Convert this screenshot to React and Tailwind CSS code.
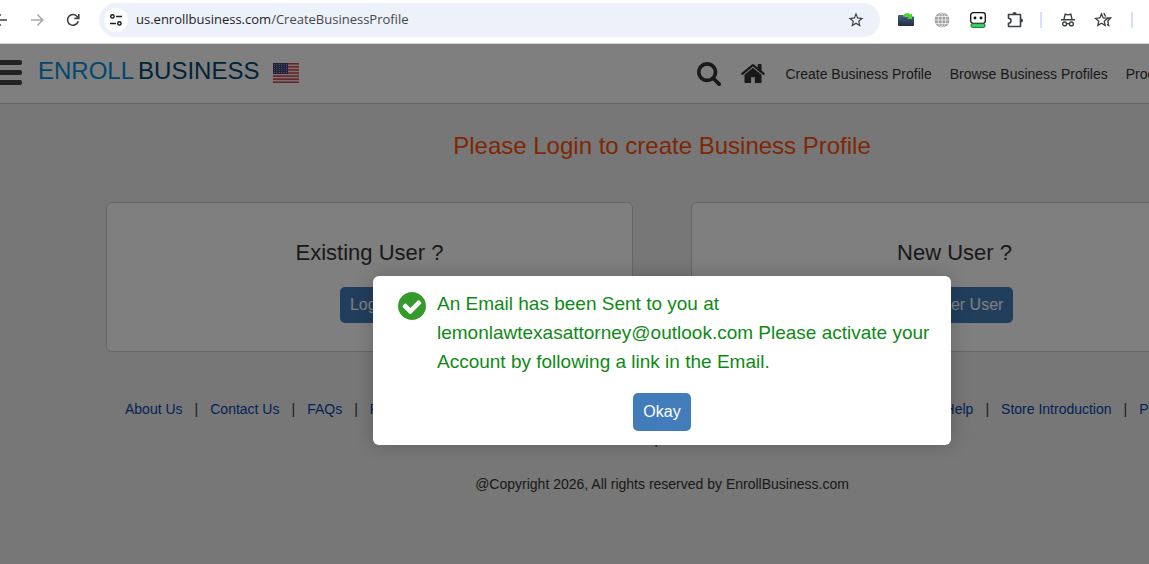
import { Fragment } from 'react'
import { MdStarBorder } from 'react-icons/md'

const navLinks = ['Create Business Profile', 'Browse Business Profiles', 'Products']
const footerLeft = ['About Us', 'Contact Us', 'FAQs', 'Privacy Policy']
const footerRight = ['Help', 'Store Introduction', 'Pricing']

const ArrowIcon = ({ className }) => (
  <svg viewBox="0 0 14 14" className={className} fill="none" stroke="currentColor" strokeWidth="1.6">
    <path d="M1 7h11.5M7.3 1.5L12.8 7l-5.5 5.5" />
  </svg>
)

const ReloadIcon = () => (
  <svg viewBox="0 0 14 14" className="size-[14px] text-[#3c4043]" fill="none" stroke="currentColor" strokeWidth="1.6">
    <path d="M12.2 8.2A5.4 5.4 0 1 1 11.4 3.8L12.6 5" />
    <path d="M12.8 1v4.400H8.400" />
  </svg>
)

const TuneIcon = () => (
  <svg viewBox="0 0 14 14" className="size-[14px] text-[#1f1f1f]" fill="none" stroke="currentColor" strokeWidth="1.5">
    <circle cx="3.4" cy="3.4" r="1.7" />
    <path d="M7 3.400h6M1 10.400h6" />
    <circle cx="10.4" cy="10.4" r="1.7" />
  </svg>
)

const FolderIcon = () => (
  <svg viewBox="0 0 16 16" className="size-4">
    <defs>
      <linearGradient id="folder" x1="0" y1="0" x2="0" y2="1">
        <stop offset="0" stopColor="#4a607e" />
        <stop offset="1" stopColor="#1f2c42" />
      </linearGradient>
    </defs>
    <path d="M0 4q0-1 1-1h4l2 1.500h8q1 0 1 1V13q0 1-1 1H1q-1 0-1-1z" fill="url(#folder)" />
    <path d="M5 5c0-4 5-5 7.500-2.500L14 1.500V7H9l1.700-1.700C9 3.700 7 3.700 5 5z" fill="#45d62b" />
  </svg>
)

const GlobeIcon = () => (
  <svg viewBox="0 0 16 16" className="size-4">
    <circle cx="8" cy="8" r="7.5" fill="#a3a3a3" />
    <g fill="none" stroke="#f3f3f3" strokeWidth="0.8">
      <path d="M8 0v16M0 8h16M1.500 4.500h13M1.500 11.500h13" />
      <ellipse cx="8" cy="8" rx="3.8" ry="7.5" />
    </g>
  </svg>
)

const RobotIcon = () => (
  <svg viewBox="0 0 16 16" className="size-4">
    <rect x="0.7" y="0.7" width="14.6" height="10.6" rx="2.5" fill="#fff" stroke="#111" strokeWidth="1.3" />
    <circle cx="5" cy="6" r="1.4" fill="#111" />
    <circle cx="11" cy="6" r="1.4" fill="#111" />
    <rect x="1" y="11.6" width="14" height="3.8" rx="1.5" fill="#37d565" stroke="#17602c" strokeWidth="0.9" />
  </svg>
)

const PuzzleIcon = () => (
  <svg viewBox="0 0 18 18" className="size-[18px] text-[#3c4043]">
    <path
      d="M2.500 3.500h12v12h-12v-3.200a2.500 2.500 0 0 0 0-5z"
      fill="none"
      stroke="currentColor"
      strokeWidth="1.6"
      strokeLinejoin="round"
    />
    <path d="M6.500 3a2 2 0 0 1 4 0zM15 7.500a2 2 0 0 1 0 4z" fill="currentColor" />
  </svg>
)

const IncognitoIcon = () => (
  <svg viewBox="0 0 14 14" className="size-[14px] text-[#3c4043]" fill="none" stroke="currentColor" strokeWidth="1.4">
    <path d="M3 6l1.200-4.800 2.800.700 2.800-.700L11 6M0 6.700h14" />
    <circle cx="3.6" cy="10.9" r="1.9" />
    <circle cx="10.4" cy="10.9" r="1.9" />
    <path d="M5.500 10.700h3" />
  </svg>
)

const StarsIcon = () => (
  <svg viewBox="0 0 18 16" className="h-4 w-[18px] text-[#3c4043]" fill="none" stroke="currentColor" strokeWidth="1.3">
    <path d="M7.500 2l1.700 4 4.300.4-3.300 2.800 1 4.200-3.700-2.200-3.700 2.200 1-4.200L1.500 6.400 5.800 6z" />
    <path d="M9.800 1l1.800 3.600M12.800 6h3.800l-2.800 3 .9 4.500-1.800-1" />
  </svg>
)

const SearchIcon = () => (
  <svg viewBox="0 0 1664 1664" className="size-6" fill="currentColor">
    <path d="M1152 704q0-185-131.500-316.500T704 256 387.500 387.500 256 704t131.500 316.500T704 1152t316.500-131.500T1152 704zm512 832q0 52-38 90t-90 38q-54 0-90-38l-343-342q-179 124-399 124-143 0-273.500-55.500t-225-150-150-225T0 704t55.500-273.500 150-225 225-150T704 0t273.500 55.500 225 150 150 225T1408 704q0 220-124 399l343 343q37 37 37 90z" />
  </svg>
)

const HomeIcon = () => (
  <svg viewBox="25 253 1615 1283" className="h-[19px] w-6" fill="currentColor">
    <path d="M1408 992v480q0 26-19 45t-45 19H960v-384H704v384H320q-26 0-45-19t-19-45V992q0-1 .5-3t.5-3l575-474 575 474q1 2 1 6zm223-69l-62 74q-8 9-21 11h-3q-13 0-21-7L832 424 140 1001q-12 8-24 7-13-2-21-11l-62-74q-8-10-7-23.500T37 878l719-599q32-26 76-26t76 26l244 204V288q0-14 9-23t23-9h192q14 0 23 9t9 23v408l219 182q10 8 11 21.500t-7 23.500z" />
  </svg>
)

const CheckIcon = () => (
  <svg viewBox="0 0 1536 1536" className="mt-4 size-7 shrink-0 text-[#35992c]" fill="currentColor">
    <path d="M1284 606q0-28-18-46l-91-90q-19-19-45-19t-45 19l-408 407-226-226q-19-19-45-19t-45 19l-91 90q-18 18-18 46 0 27 18 45l362 362q19 19 45 19 27 0 46-19l543-543q18-18 18-45zm252 162q0 209-103 385.500T1153.500 1433 768 1536t-385.500-103T103 1153.500 0 768t103-385.500T382.500 103 768 0t385.500 103T1433 382.500 1536 768z" />
  </svg>
)

const FlagIcon = () => (
  <svg viewBox="0 0 26 20" className="h-5 w-[26px]">
    <rect width="26" height="20" fill="#f0e4e4" />
    {[0, 1, 2, 3, 4, 5, 6].map((i) => (
      <rect key={i} y={i * 3.08} width="26" height="1.54" fill="#d04450" />
    ))}
    <rect width="15" height="10.8" fill="#3a4078" />
    {[0, 1, 2, 3, 4].map((row) =>
      [0, 1, 2, 3, 4, 5].map((col) => (
        <circle key={`${row}-${col}`} cx={1.5 + col * 2.4} cy={1.4 + row * 2} r="0.5" fill="#c8cbe4" />
      ))
    )}
  </svg>
)

const BrowserBar = () => (
  <div className="relative z-10 flex h-11 shrink-0 items-start border-b border-[#d5d5d5] bg-white">
    <div className="flex h-10 w-[99px] shrink-0 items-center">
      <button aria-label="Back" className="w-2 overflow-hidden">
        <ArrowIcon className="-ml-[6px] size-[14px] max-w-none rotate-180 text-[#3c4043]" />
      </button>
      <button aria-label="Forward" className="ml-[22px]">
        <ArrowIcon className="size-[14px] text-[#a8a8a8]" />
      </button>
      <button aria-label="Reload" className="ml-[22px]">
        <ReloadIcon />
      </button>
    </div>
    <div className="mt-[3px] flex h-[34px] w-[781px] shrink-0 items-center rounded-full bg-[#ecf1fa] pl-[5px] pr-[15px]">
      <button aria-label="Site information" className="flex size-6 items-center justify-center rounded-full bg-white">
        <TuneIcon />
      </button>
      <div className="ml-2 flex-1 font-['Open_Sans',sans-serif] text-[13px] text-[#1f1f1f]">
        us.enrollbusiness.com<span className="text-[#474747]">/CreateBusinessProfile</span>
      </div>
      <button aria-label="Bookmark">
        <MdStarBorder className="size-[18px] text-[#3c4043]" />
      </button>
    </div>
    <div className="flex h-10 shrink-0 items-center gap-5 pl-[18px]">
      <FolderIcon />
      <GlobeIcon />
      <RobotIcon />
      <PuzzleIcon />
    </div>
    <div className="ml-4 flex h-10 shrink-0 items-center gap-[19px]">
      <span className="h-4 w-[2px] bg-[#d3e3fd]" />
      <IncognitoIcon />
      <StarsIcon />
      <div className="flex items-center gap-4">
        <span className="h-4 w-[2px] bg-[#d3e3fd]" />
        <span className="size-4 rounded-full bg-black" />
      </div>
    </div>
  </div>
)

const SiteHeader = () => (
  <header className="flex h-[60px] items-center border-b border-[#c8c8c8] bg-white">
    <button aria-label="Menu" className="mb-[3px] flex w-[22px] flex-col gap-[5px]">
      <span className="h-[5px] rounded-r-xs bg-[#444]" />
      <span className="h-[5px] rounded-r-xs bg-[#444]" />
      <span className="h-[5px] rounded-r-xs bg-[#444]" />
    </button>
    <a href="#home" className="ml-4 flex items-center gap-1 pb-[6px] text-2xl">
      <span className="text-[#0090dc]">ENROLL</span>
      <span className="text-[#00486c]">BUSINESS</span>
    </a>
    <div className="ml-[14px] pb-[2px]">
      <FlagIcon />
    </div>
    <nav className="ml-[398px] flex items-center text-[#333]">
      <button aria-label="Search">
        <SearchIcon />
      </button>
      <a href="#home" aria-label="Home" className="mx-5">
        <HomeIcon />
      </a>
      <div className="flex gap-[18px] text-sm whitespace-nowrap">
        {navLinks.map((label) => (
          <a key={label} href="#nav">{label}</a>
        ))}
      </div>
    </nav>
  </header>
)

const UserCard = ({ title, action }) => (
  <section className="flex h-[150px] flex-1 flex-col items-center rounded-md border border-[#ccc] bg-white pt-[34px] text-[#333]">
    <h2 className="text-[22px] leading-8">{title}</h2>
    <button className="mt-[18px] h-9 rounded-[5px] bg-[#427cba] px-[10px] text-base text-white">{action}</button>
  </section>
)

const LinkRow = ({ links }) => (
  <div className="flex gap-3">
    {links.map((label, i) => (
      <Fragment key={label}>
        {i > 0 && <span>|</span>}
        <a href="#footer" className="text-[#0645ad]">{label}</a>
      </Fragment>
    ))}
  </div>
)

const EmailSentDialog = () => (
  <div className="absolute inset-0 flex items-start justify-center bg-black/50 pt-[232px]">
    <div role="dialog" aria-label="Email sent" className="w-[578px] rounded-md bg-white pb-[14px] shadow-[0_0_20px_rgba(0,0,0,0.2)]">
      <div className="flex gap-[11px] pl-[25px] pr-3">
        <CheckIcon />
        <p className="pt-[13px] text-[19px] leading-[29px] text-[#0f8a16]">
          An Email has been Sent to you at lemonlawtexasattorney@outlook.com Please activate your Account by
          following a link in the Email.
        </p>
      </div>
      <div className="mt-[17px] flex justify-center">
        <button className="h-[38px] rounded-[5px] bg-[#427cba] px-[10px] text-base text-white">Okay</button>
      </div>
    </div>
  </div>
)

export default function App() {
  return (
    <div className="flex h-screen flex-col overflow-hidden font-['Liberation_Sans',Arial,sans-serif]">
      <BrowserBar />
      {/* site keeps its desktop width and runs past narrow windows */}
      <div className="relative min-w-[1324px] flex-1 bg-[#eee]">
        <SiteHeader />
        <main className="px-[106px] pt-[26px]">
          <h1 className="text-center text-2xl text-[#ff4f0a]">Please Login to create Business Profile</h1>
          <div className="mt-10 flex gap-[58px]">
            <UserCard title="Existing User ?" action="Login" />
            <UserCard title="New User ?" action="Register User" />
          </div>
        </main>
        <footer className="mt-[47px] text-sm text-[#333]">
          <div className="flex justify-between whitespace-nowrap pl-[125px] pr-[142px]">
            <LinkRow links={footerLeft} />
            <LinkRow links={footerRight} />
          </div>
          <div className="mt-[10px] text-center">
            <a href="#explore" className="text-[#0645ad]">Explore</a>
          </div>
          <p className="mt-[25px] text-center">@Copyright 2026, All rights reserved by EnrollBusiness.com</p>
        </footer>
        <EmailSentDialog />
      </div>
    </div>
  )
}
